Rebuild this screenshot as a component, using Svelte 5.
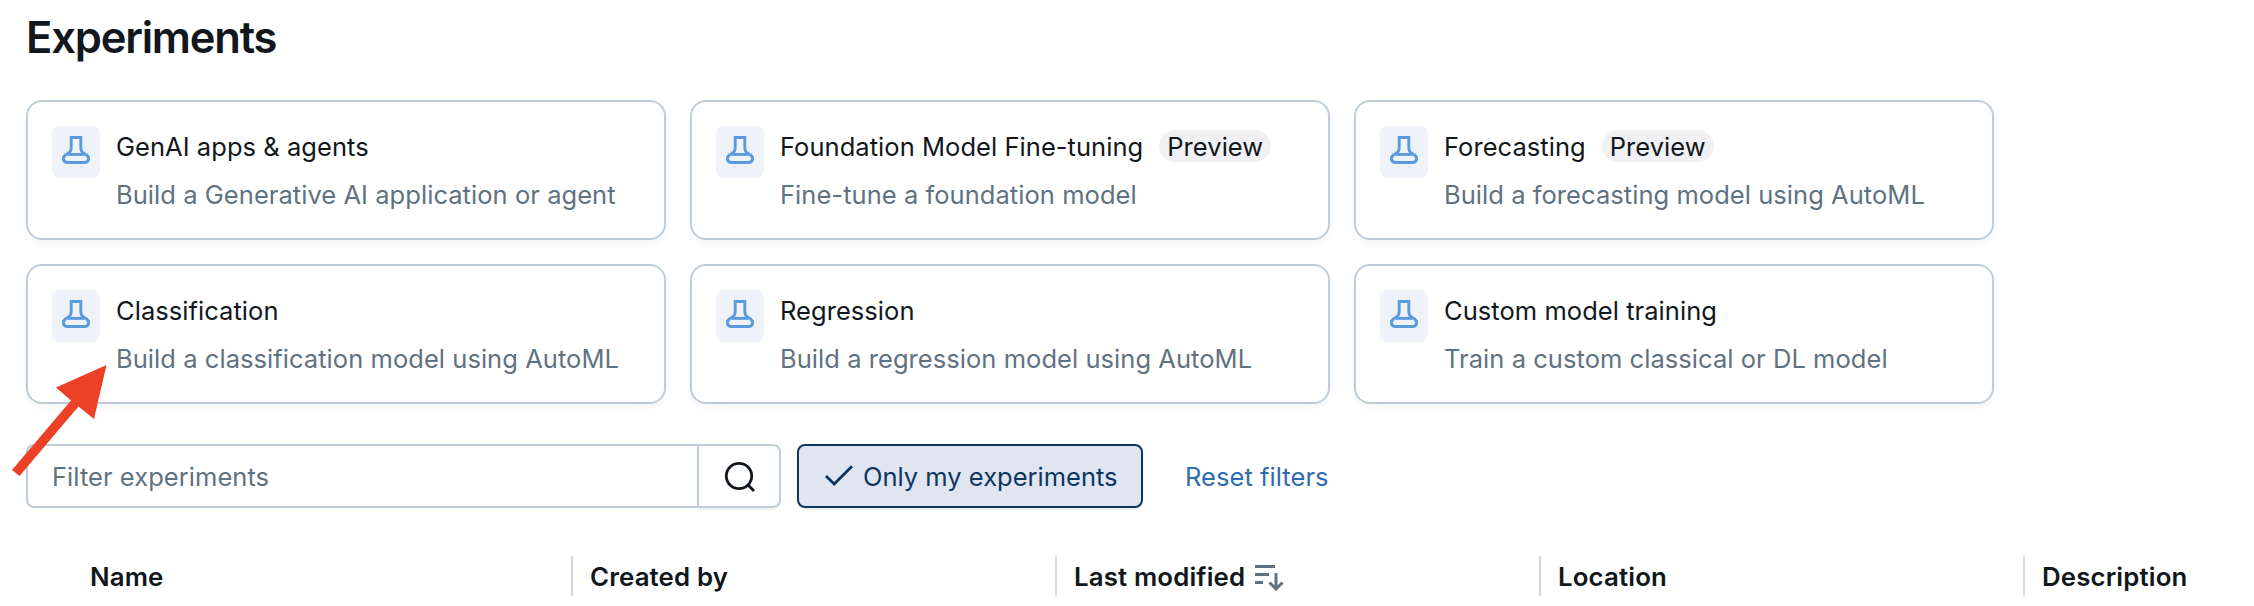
<script>
  const cards = [
    { title: 'GenAI apps & agents', desc: 'Build a Generative AI application or agent' },
    { title: 'Foundation Model Fine-tuning', desc: 'Fine-tune a foundation model', preview: true },
    { title: 'Forecasting', desc: 'Build a forecasting model using AutoML', preview: true },
    { title: 'Classification', desc: 'Build a classification model using AutoML' },
    { title: 'Regression', desc: 'Build a regression model using AutoML' },
    { title: 'Custom model training', desc: 'Train a custom classical or DL model' }
  ];
  const columns = ['Name', 'Created by', 'Last modified', 'Location', 'Description'];
</script>

<main>
  <h1>Experiments</h1>

  <section class="cards">
    {#each cards as card}
      <article class="card">
        <div class="tile">
          <svg width="28" height="28" viewBox="0 0 28 28" fill="none" stroke="#5a9ade" stroke-width="2.9" stroke-linejoin="miter">
            <path d="M9.2 1.5H18.8V12C18.8 14.6 20 16.3 22.6 17.8L24.8 19.2C28.2 21.6 26.6 26.5 22.6 26.5H5.4C1.4 26.5 -0.2 21.6 3.2 19.2L5.400 17.8C8 16.3 9.2 14.6 9.200 12Z" />
            <path d="M6 18.400H22" />
          </svg>
        </div>
        <div class="copy">
          <div class="title"><span>{card.title}</span>{#if card.preview}<span class="badge">Preview</span>{/if}</div>
          <div class="desc">{card.desc}</div>
        </div>
      </article>
    {/each}
  </section>

  <section class="filters">
    <div class="search">
      <div class="field">Filter experiments</div>
      <button class="go" aria-label="Search">
        <svg width="32" height="32" viewBox="0 0 32 32" fill="none" stroke="#11171c" stroke-width="2.8">
          <circle cx="16" cy="16" r="12.7" />
          <path d="M24.500 24.500L31 31" />
        </svg>
      </button>
    </div>
    <button class="toggle">
      <svg width="28" height="22" viewBox="0 0 28 22" fill="none" stroke="#0e3661" stroke-width="2.8">
        <path d="M1 11L9.200 19L27 1.200" />
      </svg>
      <span>Only my experiments</span>
    </button>
    <a class="reset" href="#reset">Reset filters</a>
  </section>

  <section class="head">
    {#each columns as column, i}
      <div class="cell">
        <span>{column}</span>
        {#if i === 2}
          <svg width="30" height="30" viewBox="0 0 30 30" fill="none" stroke="#5f7281" stroke-width="3">
            <path d="M0 5.500H20M0 13.500H14M0 21.500H8M21 12V28M14.500 21.500L21 28L27.500 21.500" />
          </svg>
        {/if}
      </div>
    {/each}
  </section>

  <svg class="pointer" width="96" height="112" viewBox="0 0 96 112">
    <path d="M95.5 0L83 54L67.5 41.5L8.5 111L1 105L60 35.500L45 22.500Z" fill="#ec4126" />
  </svg>
</main>

<style>
  :global(body) { background: #fff; }
  main {
    position: relative;
    box-sizing: border-box;
    width: 2254px;
    height: 606px;
    overflow: hidden;
    padding: 10px 0 0 26px;
    font: 400 25.5px/42px Inter, sans-serif;
    letter-spacing: 0.05px;
    color: #11171c;
  }
  h1 { margin: 0; height: 90px; font-size: 43.5px; line-height: 54px; font-weight: 600; letter-spacing: -1.2px; }
  .cards { display: grid; grid-template-columns: repeat(3, 640px); grid-auto-rows: 140px; gap: 24px; }
  .card {
    box-sizing: border-box;
    display: flex;
    align-items: flex-start;
    gap: 16px;
    padding: 24px;
    border: 2px solid #c0cdd8;
    border-radius: 16px;
    box-shadow: 0 4px 6px rgba(0, 0, 0, 0.04);
    white-space: nowrap;
  }
  .tile { display: flex; justify-content: center; width: 48px; height: 52px; padding-top: 10px; box-sizing: border-box; border-radius: 8px; background: #eff3f9; }
  .title { display: flex; align-items: flex-start; height: 40px; gap: 16px; }
  .desc { height: 40px; margin-top: 8px; color: #5f7281; }
  .badge { height: 32px; margin-top: 4px; line-height: 34px; padding: 0 8px; border-radius: 16px; background: #f1f1f4; }
  .filters { display: flex; align-items: center; height: 64px; margin-top: 40px; }
  .search { display: flex; width: 755px; height: 64px; }
  .field { box-sizing: border-box; width: 671px; border: 2px solid #c0cdd8; border-right: 0; border-radius: 8px 0 0 8px; padding-left: 24px; line-height: 62px; color: #5f7281; }
  button { font: inherit; letter-spacing: inherit; margin: 0; }
  .go { display: flex; align-items: center; justify-content: center; box-sizing: border-box; width: 84px; padding: 0; color: #11171c; background: #fff; border: 2px solid #c0cdd8; border-radius: 0 8px 8px 0; box-shadow: 0 2px 0 rgba(0, 0, 0, 0.05); }
  .toggle { display: flex; align-items: center; gap: 10px; box-sizing: border-box; width: 346px; height: 64px; margin-left: 16px; padding: 0 0 0 26px; color: #0e3661; background: #dfe6f2; border: 2px solid #0e3661; border-radius: 8px; box-shadow: 0 2px 0 rgba(0, 0, 0, 0.05); white-space: nowrap; }
  .toggle span, .reset, .cell span { padding-top: 2px; }
  .toggle span { letter-spacing: 0; }
  .reset { margin-left: 42px; color: #2f6cb0; text-decoration: none; }
  .head { display: grid; grid-template-columns: 545px repeat(3, 484px) 231px; margin-top: 48px; font-weight: 600; font-size: 25.8px; letter-spacing: 0.15px; }
  .cell { display: flex; align-items: center; gap: 10px; box-sizing: border-box; height: 40px; padding-left: 17px; border-left: 2px solid #d1d9e1; white-space: nowrap; }
  .cell:first-child { border: 0; padding-left: 64px; }
  .pointer { position: absolute; left: 11px; top: 365px; }
</style>
